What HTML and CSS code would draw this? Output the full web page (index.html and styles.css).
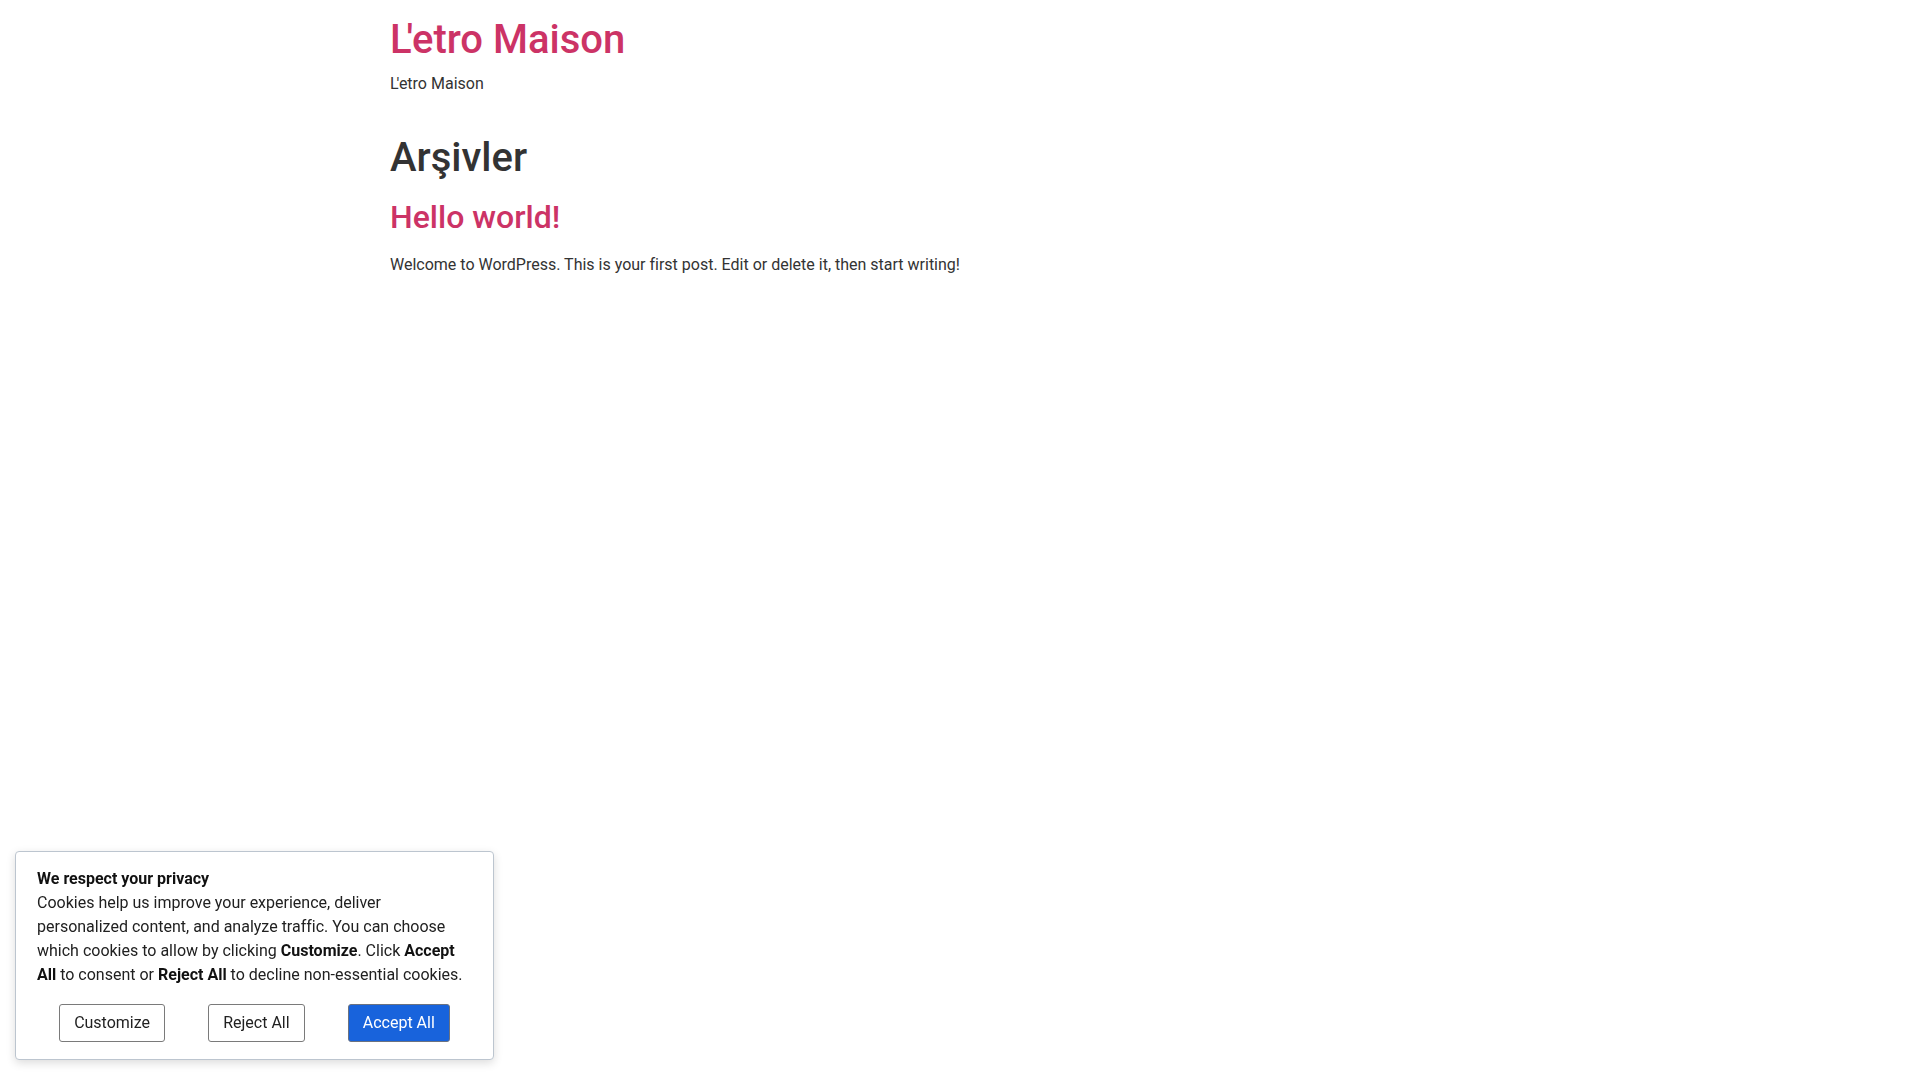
FILE: index.html
```html
<!DOCTYPE html>
<html lang="tr">
<head>
<meta charset="utf-8">
<title>Arşivler - L'etro Maison</title>
<link rel="stylesheet" href="styles.css">
</head>
<body>
<header class="site-header">
  <div class="site-branding">
    <h1 class="site-title"><a href="#"><span class="kern">L</span>'etro Maison</a></h1>
    <p class="site-description"><span class="kern">L</span>'etro Maison</p>
  </div>
</header>
<main class="site-main">
  <div class="page-header">
    <h1 class="page-title">Arşivler</h1>
  </div>
  <div class="page-content">
    <article class="post">
      <h2 class="entry-title"><a href="#">Hello world!</a></h2>
      <p>Welcome to WordPress. This is your first post. Edit or delete it, then start writing!</p>
    </article>
  </div>
</main>

<div class="consent-bar">
  <div class="consent-text">
    <p class="consent-title">We respect your privacy</p>
    <p class="consent-desc">Cookies help us improve your experience, deliver personalized content, and analyze traffic. You can choose which cookies to allow by clicking <b>Customize</b>. Click <b>Accept All</b> to consent or <b>Reject All</b> to decline non-essential cookies.</p>
  </div>
  <div class="consent-buttons">
    <button class="btn btn-outline">Customize</button>
    <button class="btn btn-outline">Reject All</button>
    <button class="btn btn-accept">Accept All</button>
  </div>
</div>
</body>
</html>
```

FILE: styles.css
```css
html, body {
  margin: 0;
  padding: 0;
}
body {
  font-family: Roboto, "Liberation Sans", sans-serif;
  font-size: 16px;
  line-height: 1.5;
  color: #333;
  background: #fff;
}
a {
  color: #c36;
  text-decoration: none;
}
.kern {
  letter-spacing: -0.13em;
}
.site-header,
.site-main {
  max-width: 1140px;
  margin: 0 auto;
}
.site-header {
  padding-top: 16px;
}
.site-title {
  margin: 0 0 8px;
  font-size: 40px;
  font-weight: 500;
  line-height: 1.2;
}
.site-description {
  margin: 0;
  font-size: 16px;
  line-height: 24px;
}
.site-main {
  padding-top: 38px;
}
.page-title {
  margin: 0 0 16px;
  font-size: 40px;
  font-weight: 500;
  line-height: 1.2;
  color: #333;
}
.entry-title {
  margin: 0 0 17px;
  font-size: 32px;
  font-weight: 500;
  line-height: 1.2;
}
.post p {
  margin: 0;
  line-height: 24px;
}

.consent-bar {
  position: fixed;
  left: 15px;
  bottom: 20px;
  width: 479px;
  box-sizing: border-box;
  background: #fff;
  border: 1px solid #bcc5cf;
  border-radius: 4px;
  box-shadow: 0 3px 10px rgba(0, 0, 0, 0.14);
  padding: 15px 0 17px;
  color: #212121;
}
.consent-text {
  padding: 0 21px;
}
.consent-title {
  margin: 0;
  font-weight: 700;
  line-height: 24px;
  color: #111;
}
.consent-desc {
  margin: 0;
  line-height: 24px;
}
.consent-desc b {
  font-weight: 700;
  color: #111;
}
.consent-buttons {
  display: flex;
  justify-content: space-evenly;
  margin-top: 17px;
}
.btn {
  font-family: Roboto, "Liberation Sans", sans-serif;
  font-size: 16px;
  line-height: 20px;
  padding: 8px 14px;
  border-radius: 3px;
  cursor: pointer;
}
.btn-outline {
  background: #fff;
  color: #212121;
  border: 1px solid #7a7a7a;
}
.btn-accept {
  background: #1863dc;
  color: #fff;
  border: 1px solid #6b7280;
}
```
